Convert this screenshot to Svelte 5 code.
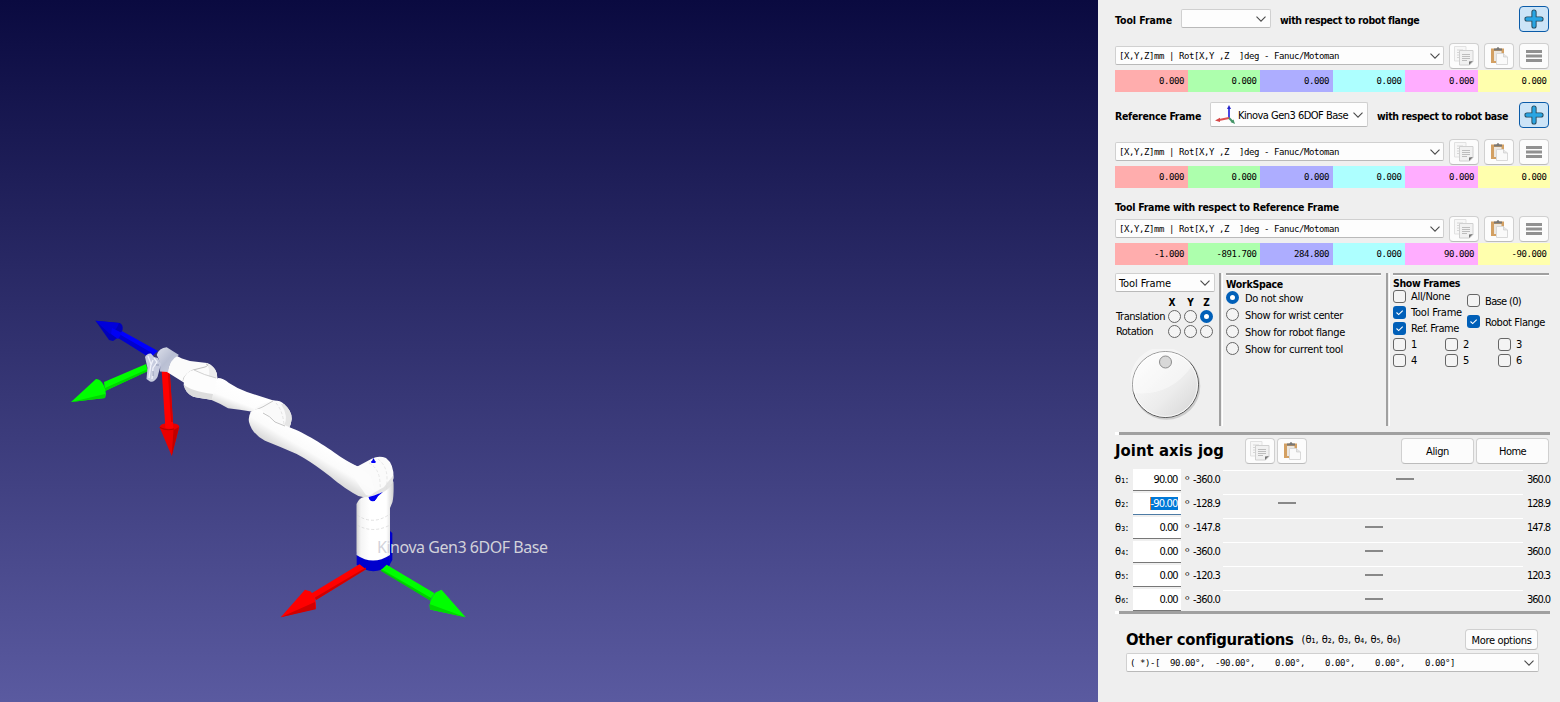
<script>
  const FORMAT = '[X,Y,Z]mm | Rot[X,Y ,Z  ]deg - Fanuc/Motoman';
  const zeros = ['0.000', '0.000', '0.000', '0.000', '0.000', '0.000'];
  const pose = ['-1.000', '-891.700', '284.800', '0.000', '90.000', '-90.000'];
  const joints = [
    { n: '₁', value: '90.00', lo: '-360.0', hi: '360.0', pos: 173 },
    { n: '₂', value: '-90.00', lo: '-128.9', hi: '128.9', pos: 55, active: true },
    { n: '₃', value: '0.00', lo: '-147.8', hi: '147.8', pos: 142 },
    { n: '₄', value: '0.00', lo: '-360.0', hi: '360.0', pos: 142 },
    { n: '₅', value: '0.00', lo: '-120.3', hi: '120.3', pos: 142 },
    { n: '₆', value: '0.00', lo: '-360.0', hi: '360.0', pos: 142 }
  ];
  const workspace = [
    ['Do not show', 58],
    ['Show for wrist center', 98],
    ['Show for robot flange', 100],
    ['Show for current tool', 98]
  ];

  // Tracks a label so that it takes the given width in pixels.
  function fit(node, width) {
    const natural = node.getBoundingClientRect().width;
    node.style.letterSpacing = (width - natural) / node.textContent.length + 'px';
  }
</script>

{#snippet t(text, width, cls = '')}<span class="t {cls}" use:fit={width}>{text}</span>{/snippet}

{#snippet chevron()}
  <svg class="chev" width="10" height="6" viewBox="0 0 10 6"><path d="M.5 .6 5 5.1 9.500 .6" fill="none" stroke="#4a4a4a" stroke-width="1.1" /></svg>
{/snippet}

{#snippet plus()}
  <button class="btn add" aria-label="Add">
    <svg width="20" height="20" viewBox="0 0 20 20"><path d="M10 3V17M3 10H17" fill="none" stroke="#25495c" stroke-width="5.200" stroke-linecap="round" /><path d="M10 3V17M3 10H17" fill="none" stroke="#29a5e3" stroke-width="3.300" stroke-linecap="round" /></svg>
  </button>
{/snippet}

{#snippet copy()}
  <button class="btn" aria-label="Copy">
    <svg width="20" height="20" viewBox="0 0 20 20">
      <path d="M.5 .5H12V15H.5Z" fill="#f7f7f7" stroke="#e1e1e1" />
      <path d="M3 4H9M3 6.500H5M3 9H5M3 11.500H5" stroke="#d6d6d6" />
      <path d="M5.500 4.500H19V15.500L15.500 19H5.500Z" fill="#f1f1f1" stroke="#d0d0d0" />
      <path d="M8 8.500H16M8 10.500H16M8 12.500H16M8 14.500H13" stroke="#bdbdbd" stroke-width="1.100" />
      <path d="M19 15 15 19V15.500Z" fill="#777" />
    </svg>
  </button>
{/snippet}

{#snippet paste()}
  <button class="btn" aria-label="Paste">
    <svg width="20" height="20" viewBox="0 0 20 20">
      <path d="M2 2.500H15V8H8V17H2Z" fill="#d3a063" />
      <path d="M5 5H12.500V8H8V15H5Z" fill="#ece7e0" />
      <path d="M5 4.500V2.500H7.500Q9 -.5 10.500 2.500H13V4.500Z" fill="#777" />
      <path d="M7.500 7.500H14L18.500 11V18.500H7.500Z" fill="#fafafa" stroke="#d9d9d9" />
      <path d="M14.500 7.500V11H18.500" fill="#e7e7e7" stroke="#ccc" stroke-width=".7" />
    </svg>
  </button>
{/snippet}

{#snippet frameRow()}
  <div class="row format">
    <div class="combo grow"><span class="mono">{FORMAT}</span>{@render chevron()}</div>
    {@render copy()}
    {@render paste()}
    <button class="btn" aria-label="Menu"><svg width="16" height="12" viewBox="0 0 16 12"><path d="M0 1.500H16M0 6H16M0 10.500H16" stroke="#919191" stroke-width="2.800" /></svg></button>
  </div>
{/snippet}

{#snippet cells(values)}
  <div class="cells">{#each values as v, i}<div class="cell c{i} mono">{v}</div>{/each}</div>
{/snippet}

{#snippet check(label, w, on = false)}
  <div class="check">
    <i class="box" class:on>{#if on}<svg width="13" height="13" viewBox="0 0 13 13"><path d="M3.500 6.500 5.700 8.600 9.700 4.600" fill="none" stroke="#fff" stroke-width="1.100" /></svg>{/if}</i>
    {@render t(label, w)}
  </div>
{/snippet}

<div class="app">
  <svg class="scene" width="1098" height="702" viewBox="0 0 1098 702">
    <defs>
      <linearGradient id="sky" x1="0" y1="0" x2="0" y2="1"><stop offset="0" stop-color="#0a0a40" /><stop offset="1" stop-color="#5a5aa0" /></linearGradient>
      <linearGradient id="arm" gradientUnits="userSpaceOnUse" x1="318" y1="442" x2="302" y2="469"><stop offset="0" stop-color="#fff" /><stop offset=".4" stop-color="#fbfbfb" /><stop offset=".7" stop-color="#e2e2e2" /><stop offset="1" stop-color="#cecece" /></linearGradient>
      <linearGradient id="link" gradientUnits="userSpaceOnUse" x1="240" y1="388" x2="231" y2="411"><stop offset="0" stop-color="#fff" /><stop offset=".55" stop-color="#fdfdfd" /><stop offset="1" stop-color="#d4d4d4" /></linearGradient>
      <linearGradient id="col" x1="0" y1="0" x2="1" y2="0"><stop offset="0" stop-color="#cfcfcf" /><stop offset=".12" stop-color="#f5f5f5" /><stop offset=".35" stop-color="#fff" /><stop offset=".8" stop-color="#fff" /><stop offset="1" stop-color="#d0d0d0" /></linearGradient>
      <linearGradient id="fl" x1="0" y1="0" x2="1" y2="1"><stop offset="0" stop-color="#dcdfea" /><stop offset=".5" stop-color="#b9bfd3" /><stop offset="1" stop-color="#c9cedd" /></linearGradient>
    </defs>
    <rect width="1098" height="702" fill="url(#sky)" />

    <path d="M120 330 158 351 150 358 118 337Z" fill="#00f" />
    <path d="M120 334.500 152 353 149 357 118 338Z" fill="#0000cf" />
    <path d="M95.500 320.700 120 323Q123.500 325 122.500 330Q119 338 113 341L109 340Z" fill="#00b" />
    <path d="M95.500 320.700 119 323Q116 331 110 334Z" fill="#0000db" />
    <path d="M112 328 122 333 118 339 111 334Z" fill="#0000f5" />
    <path d="M104 382 146 364 148 371 105 391Z" fill="#0f0" />
    <path d="M105 388 148 369 148 371 105 391Z" fill="#00d500" />
    <path d="M71 402 96 379Q101 379 104 386Q107 393 105 398Z" fill="#0f0" />
    <path d="M71 402 105 394 105 398Z" fill="#00d800" />
    <path d="M161.500 368H169.500L173.500 430H165.500Z" fill="red" />
    <path d="M167.500 368H169.500L173.500 430H171.500Z" fill="#d80000" />
    <path d="M159.700 427.500Q160 424 165 423.500L173 423.500Q179 423.500 179.300 427L171.700 456Z" fill="#e90000" />
    <path d="M173.500 430 179 427 171.700 456Z" fill="#c00000" />
    <path d="M160 427.500Q166 431 174 429" fill="none" stroke="#b50000" stroke-width="1.200" />
    <path d="M165 422H173L173.300 428Q169 429.500 165.400 428Z" fill="red" />

    <path d="M390 531 392.300 533V560L389 566Z" fill="#00c" />
    <path d="M356.700 552V565Q373 577 389.500 565.500V552Z" fill="#0000cd" />
    <path d="M359.500 564.300 366 569.300 316 600 311.700 593.300Z" fill="red" />
    <path d="M366 567.500V569.300L316 600 315 597.500Z" fill="#d00000" />
    <path d="M280.700 617.300 305 589.700 310.700 591.500Q316.500 597 316 608.500Z" fill="red" />
    <path d="M280.700 617.300 315 602 315.700 609.300Z" fill="#d00000" />
    <path d="M386.700 564.700 381 570 430 600 434.500 593.300Z" fill="#0f0" />
    <path d="M381 569V571L430 600.500 431 598Z" fill="#00d000" />
    <path d="M465.700 617.300 441.500 589.700 435.500 592.500Q428.500 600 430 609.500Z" fill="#0f0" />
    <path d="M465.700 617.300 429.500 604 430 609.500Z" fill="#00d800" />

    <path d="M356.500 504Q359 498 364 497L390 475 393.500 482Q394 495 392.500 502L390 508V555Q373 566 356.500 555Z" fill="url(#col)" />
    <path d="M357 515Q373 526 390 514M357 525Q373 534 390 525" fill="none" stroke="#d4d4d4" stroke-width=".7" stroke-dasharray="3 2" />
    <path d="M369 495 384 490Q378 494 377 498L374.500 501Q369 502 368.700 497Z" fill="#0000f0" />
    <path d="M345 467 357.300 466.500 371.700 458.700Q379 455 386 458Q394 464 393.500 478Q392 488 381 493Q374 498 367 497.500Z" fill="#fbfbfb" />
    <path d="M393.500 475Q394 488 381 493L366 497.500 384 487Z" fill="#d3d3d3" opacity=".6" />
    <path d="M368.500 497Q370 501.500 374.500 501L377 497 383 492 374 495.500Z" fill="#0000f0" />
    <path d="M369 463Q379 468 380 482T379 493M378 459Q387 466 387 478T386 489" fill="none" stroke="#dedede" stroke-width=".7" stroke-dasharray="3 2" />
    <path d="M373.500 458 375.500 462H371.500Z" fill="#0000dc" /><path d="M371.300 461H375.500V463H371.300Z" fill="#00f" />

    <path d="M218 378Q223 378 229 383Q238 389 247 392L275 401 282 410 258 413 251 411.500Q240 409.500 228 408.300Q219 403 211.500 400L205 385Z" fill="url(#link)" />
    <path d="M213 381Q208 390 213 400" fill="none" stroke="#ddd" stroke-dasharray="3 2" stroke-width=".7" />
    <path d="M250 413Q256 405 271.700 400.700Q280 400 284 404Q292 411 291.700 419Q291 425 289 428.500L265 425Z" fill="#fafafa" />
    <path d="M284 404Q292 411 291.700 419Q291 425 289 428.500L284 426Q289 416 281 404Z" fill="#e5e5e5" />
    <path d="M251 412Q264 407 273 401" fill="none" stroke="#c8c8c8" />
    <path d="M251 412Q254 409 259 409Q266 412 273 420L290.700 427.700C303 432 326 446 340 456.500Q350 463 358 466.500L375 491Q371 498 363 497Q357 496 353 493C341 486 334 479 323 471Q309 460.500 296.700 454Q281 447 265 440.700Q252 434 249 422Q248 416 251 412Z" fill="url(#arm)" />
    <path d="M344 459.500Q352 465 358 466.500L371 476 375 490Q372 497 366 495Q352 476 344 459.500Z" fill="#fcfcfc" opacity=".85" />
    <path d="M263 413Q270 416 275 422L285 426" fill="none" stroke="#bcbcbc" stroke-width=".9" />
    <path d="M276 403Q283 411 284 425" fill="none" stroke="#d8d8d8" stroke-width=".7" stroke-dasharray="3 2" />

    <path d="M173 354 182 358.500 190 361 207 363Q215 366 217 374V379L206 386 183 382 167 372Z" fill="#fbfbfb" />
    <path d="M207 363Q217 367 217.500 378L206 383Q212 375 207 363Z" fill="#ededed" />
    <path d="M183 381Q184 374 193 370L205 367Q210 365 206 364" fill="none" stroke="#bfbfbf" />
    <path d="M183.300 380Q186 371 194 370Q202 376 217 378L212 400Q200 398 193.300 396.700Q184 393 183.300 380Z" fill="#fdfdfd" />
    <path d="M183.300 384Q190 391 213 394L212 400Q200 398 193.300 396.700Q185 393 183.300 384Z" fill="#ddd" />
    <path d="M194 370Q204 375 216 378" fill="none" stroke="#c6c6c6" stroke-width=".8" />
    <path d="M156.700 355Q159 348 166.700 347.300L179 355Q169 360 168 372L160 371.500Q161 362 156.700 355Z" fill="url(#fl)" />
    <path d="M145 357Q147 353 151 353.500L154 357 158 358 161 364 157.500 377Q154 383 150 381.500L146.500 379 147.500 368Z" fill="#c7ccdf" />
    <path d="M148 356 151 364 149 378M154 358 157 362 153 368 152 379M153 360 151 365" fill="none" stroke="#f0f2fa" stroke-width="1.300" /><path d="M153 371V376M156 365H159" stroke="#9299b5" />
    <text x="377" y="553" textLength="171" class="label">Kinova Gen3 6DOF Base</text>
  </svg>

  <aside>
    <div class="row top">
      {@render t('Tool Frame', 57, 'b')}
      <div class="combo small">{@render chevron()}</div>
      {@render t('with respect to robot flange', 139, 'b')}
      {@render plus()}
    </div>
    {@render frameRow()}
    {@render cells(zeros)}

    <div class="row ref">
      {@render t('Reference Frame', 86, 'b')}
      <div class="combo base">
        <svg width="21" height="20" viewBox="0 0 21 20"><path d="M14 13V3" stroke="#3434df" stroke-width="1.800" /><path d="M12 4 14 0 16 4Z" fill="#2424c9" /><path d="M14 13 4 15" stroke="#e05050" stroke-width="1.800" /><path d="M0 15.500 5 12.800V17Z" fill="#d64848" /><path d="M14 13 18 17" stroke="#459568" stroke-width="2" /><path d="M20 19 15.500 17 18.500 14.500Z" fill="#459568" /></svg>
        {@render t('Kinova Gen3 6DOF Base', 110)}
        {@render chevron()}
      </div>
      {@render t('with respect to robot base', 131, 'b')}
      {@render plus()}
    </div>
    {@render frameRow()}
    {@render cells(zeros)}

    <div class="heading">{@render t('Tool Frame with respect to Reference Frame', 224, 'b')}</div>
    {@render frameRow()}
    {@render cells(pose)}

    <section class="panels">
      <div class="jog">
        <div class="combo">{@render t('Tool Frame', 52)}{@render chevron()}</div>
        <div class="axes">
          <span></span><b class="x">X</b><b>Y</b><b>Z</b>
          {@render t('Translation', 49)}<i class="radio"></i><i class="radio"></i><i class="radio on"></i>
          {@render t('Rotation', 37)}<i class="radio"></i><i class="radio"></i><i class="radio"></i>
        </div>
        <svg class="dial" width="72" height="72" viewBox="0 0 72 72">
          <defs><linearGradient id="dial" x1="0" y1="0" x2="1" y2="1"><stop offset="0" stop-color="#fff" /><stop offset=".6" stop-color="#ececec" /><stop offset="1" stop-color="#d4d4d4" /></linearGradient></defs>
          <circle cx="36.500" cy="37" r="33.800" fill="#ccc" />
          <circle cx="35.500" cy="35.500" r="33" fill="url(#dial)" stroke="#555" />
          <path d="M3.500 44Q40 48 62 17A32 32 0 0 0 3.500 44Z" fill="#fff" opacity=".4" />
          <circle cx="35.500" cy="35.500" r="32" fill="none" stroke="#fff" opacity=".8" />
          <circle cx="35.500" cy="13" r="6" fill="#d8d8d8" stroke="#8c8c8c" />
        </svg>
      </div>
      <div class="vline"></div>
      <div class="group ws">
        {@render t('WorkSpace', 57, 'b')}
        {#each workspace as [label, w], i}
          <div class="option"><i class="radio" class:on={i === 0}></i>{@render t(label, w)}</div>
        {/each}
      </div>
      <div class="vline"></div>
      <div class="group sf">
        {@render t('Show Frames', 67, 'b')}
        <div class="two">
          <div class="colA">{@render check('All/None', 39)}{@render check('Tool Frame', 51, true)}{@render check('Ref. Frame', 48, true)}</div>
          <div class="colB">{@render check('Base (0)', 36)}{@render check('Robot Flange', 60, true)}</div>
        </div>
        <div class="nums">{#each [1, 2, 3, 4, 5, 6] as n}{@render check(String(n), 6)}{/each}</div>
      </div>
    </section>

    <div class="hr"></div>
    <div class="row jhead">
      {@render t('Joint axis jog', 109, 'big')}
      <span class="jbtns">{@render copy()}{@render paste()}</span>
      <span class="grow"></span>
      <button class="btn wide">{@render t('Align', 23)}</button>
      <button class="btn wide">{@render t('Home', 27)}</button>
    </div>
    <div class="joints">
      {#each joints as j}
        <div class="joint">
          <span class="theta">θ<small>{j.n}</small>:</span>
          <div class="input" class:active={j.active}><span class:sel={j.active}>{@render t(j.value, j.value.length === 6 ? 27 : j.value.length === 5 ? 24 : 18)}</span></div>
          <span class="deg">º</span>
          <span class="lo">{@render t(j.lo, 27)}</span>
          <div class="track"><i style="margin-left: {j.pos}px"></i></div>
          <span class="hi">{@render t(j.hi, 23)}</span>
        </div>
      {/each}
    </div>
    <div class="hr second"></div>

    <div class="other">
      <div class="row">
        {@render t('Other configurations', 167, 'big')}
        <span class="thetas" use:fit={99}>(θ₁, θ₂, θ₃, θ₄, θ₅, θ₆)</span>
        <span class="grow"></span>
        <button class="btn more">{@render t('More options', 60)}</button>
      </div>
      <div class="combo"><span class="mono">{'( *)-[  90.00°,  -90.00°,    0.00°,    0.00°,    0.00°,    0.00°]'}</span>{@render chevron()}</div>
    </div>
  </aside>
</div>

<style>
  :global(body) { margin: 0; overflow: hidden; }
  .app { display: flex; width: 1560px; height: 702px; background: #efefef; font: 11px/14px 'DejaVu Sans Condensed', 'DejaVu Sans', sans-serif; font-stretch: condensed; color: #000; }
  .app * { box-sizing: border-box; }
  .scene { display: block; flex: none; }
  .label { font-family: 'Noto Sans', sans-serif; font-size: 16px; font-stretch: normal; fill: #d2d2da; }
  aside { width: 462px; padding: 6px 10px 0 17px; display: flex; flex-direction: column; }
  .t { display: inline-block; width: fit-content; justify-self: start; white-space: pre; flex: none; }
  .b, b { font-weight: bold; }
  .b { font-size: 10.5px; }
  .big { font-size: 16.5px; line-height: 22px; font-weight: bold; }
  .mono { font-family: 'DejaVu Sans Mono', monospace; font-size: 9px; letter-spacing: -.418px; white-space: pre; font-stretch: normal; }
  .row { display: flex; align-items: center; flex: none; }
  .grow { flex: 1; }
  .top { height: 26px; gap: 9px; padding-right: 1px; }
  .ref { height: 26px; gap: 9px; margin-top: 10px; padding-right: 1px; }
  .top > .t, .ref > .t, .btn > .t, .base .t, .jog .combo .t { padding-top: 2px; }
  .top .add, .ref .add { margin-left: auto; }
  .top .combo, .ref .combo { margin-bottom: 1px; }
  .format { height: 26px; margin-top: 11px; gap: 5px; padding-right: 1px; }
  .heading { height: 14px; margin: 12px 0 3px; }
  .heading + .format { margin-top: -1px; }
  .combo { display: flex; align-items: center; justify-content: space-between; height: 19px; background: #fdfdfd; border: 1px solid #d0d0d0; border-bottom-color: #b9b9b9; border-radius: 2px; padding: 0 4px 0 3px; flex: none; }
  .combo.grow { flex: 1; margin: 0 -1px 1px 0; padding-right: 3px; }
  .combo + .btn { margin-left: 1px; }
  .combo .chev { flex: none; margin-left: auto; }
  .small { width: 90px; }
  .base { width: 158px; height: 25px; padding-left: 4px; }
  .base .t { margin-left: 2px; }
  .btn { width: 30px; height: 26px; padding: 0; background: #fcfcfc; border: 1px solid #d0d0d0; border-bottom-color: #bcbcbc; border-radius: 4px; display: flex; align-items: center; justify-content: center; font: inherit; color: #000; flex: none; }
  .btn svg { display: block; }
  .add { background: #cce4f7; border-color: #0a5ba8; }
  .cells { display: grid; grid-template-columns: repeat(6, 1fr); height: 22px; margin-top: 1px; flex: none; }
  .cell { text-align: right; padding-right: 3.5px; line-height: 22px; }
  .c0 { background: #ffadad; } .c1 { background: #adffad; } .c2 { background: #adadff; } .c3 { background: #adffff; } .c4 { background: #ffadff; } .c5 { background: #ffffad; }

  .panels { display: flex; height: 159px; margin-top: 8px; flex: none; }
  .jog { width: 100px; }
  .axes { display: grid; grid-template-columns: 52px 16px 16px 16px; grid-template-rows: 15px 15px 15px; margin-top: 2px; align-items: center; padding-left: 1px; margin-bottom: -1px; }
  .axes b { font-size: 10px; justify-self: center; padding: 2px 3px 0 0; }
  .axes .x { padding-right: 8px; }
  .axes .t { padding-top: 1px; }
  .radio { display: block; width: 13px; height: 13px; border: 1px solid #666; border-radius: 50%; background: #f4f4f4; flex: none; }
  .radio.on { border: 4px solid #005fb8; background: #fff; }
  .dial { display: block; margin: 11px 0 0 15px; }
  .vline { width: 4px; height: 153px; margin-left: 4px; border-left: 2px solid #a0a0a0; border-right: 1px solid #fff; flex: none; }
  .group { border-top: 2px solid #a0a0a0; box-shadow: inset 0 1px #fff; height: 40px; padding-top: 2px; margin-left: 3px; flex: none; }
  .ws { width: 155px; margin-right: 1px; }
  .ws > .b { margin-bottom: -2px; }
  .sf { width: 156px; padding-top: 1px; }
  .group > .t { display: block; }
  .option { display: flex; align-items: center; height: 17px; gap: 6px; }
  .option .t { padding-top: 2px; }
  .two { display: flex; margin-top: -2px; height: 48px; }
  .colA { width: 74px; }
  .colB { padding-top: 2px; }
  .colB .check { height: 21px; }
  .check { display: flex; align-items: center; height: 16px; gap: 5px; }
  .check .t { padding-top: 2px; }
  .box { width: 13px; height: 13px; border: 1px solid #666; border-radius: 3px; background: #f4f4f4; flex: none; display: block; }
  .box.on { background: #005fb8; border: 0; }
  .box svg { display: block; }
  .nums { display: grid; grid-template-columns: 52px 53px 50px; }

  .hr { height: 3px; background: linear-gradient(90deg, #fff 4px, #a0a0a0 4px); flex: none; }
  .jhead { height: 26px; margin-top: 3px; padding-right: 1px; gap: 2px; }
  .jbtns { display: flex; gap: 2px; margin-left: 19px; }
  .wide { width: 73px; }
  .joints { margin-top: 4px; }
  .joint { display: flex; height: 24px; align-items: center; }
  .theta { width: 18px; flex: none; white-space: nowrap; letter-spacing: .1px; }
  .theta small { font-size: 11px; }
  .input { width: 48px; height: 22px; background: #fff; border-bottom: 1px solid #777; display: flex; justify-content: flex-end; align-items: center; padding-right: 3.5px; flex: none; }
  .active { border-bottom-color: #4d7ba5; }
  .sel { background: #0078d7; color: #fff; height: 13px; line-height: 13px; border-left: 1px solid #f08030; display: flex; align-items: center; }
  .deg { width: 12px; padding-left: 4px; flex: none; font-family: 'Open Sans', sans-serif; font-size: 12px; font-stretch: normal; }
  .lo { width: 27px; display: flex; justify-content: flex-end; flex: none; }
  .track { width: 300px; margin-left: 3px; height: 20px; border-top: 1px solid #fff; padding-top: 7px; flex: none; }
  .track i { display: block; width: 18px; height: 2px; background: #888; }
  .hi { margin-left: auto; display: flex; }
  .second { margin-top: -1px; }
  .other { padding: 14px 11px 0; }
  .other .row { height: 22px; padding-right: 1px; }
  .other .big { padding-top: 2px; }
  .thetas { margin-left: 8px; padding-top: 1px; white-space: nowrap; }
  .more { width: 73px; height: 21px; }
  .more .t { padding-top: 3px; }
  .other .combo { margin-top: 3px; padding-top: 1px; }
</style>
